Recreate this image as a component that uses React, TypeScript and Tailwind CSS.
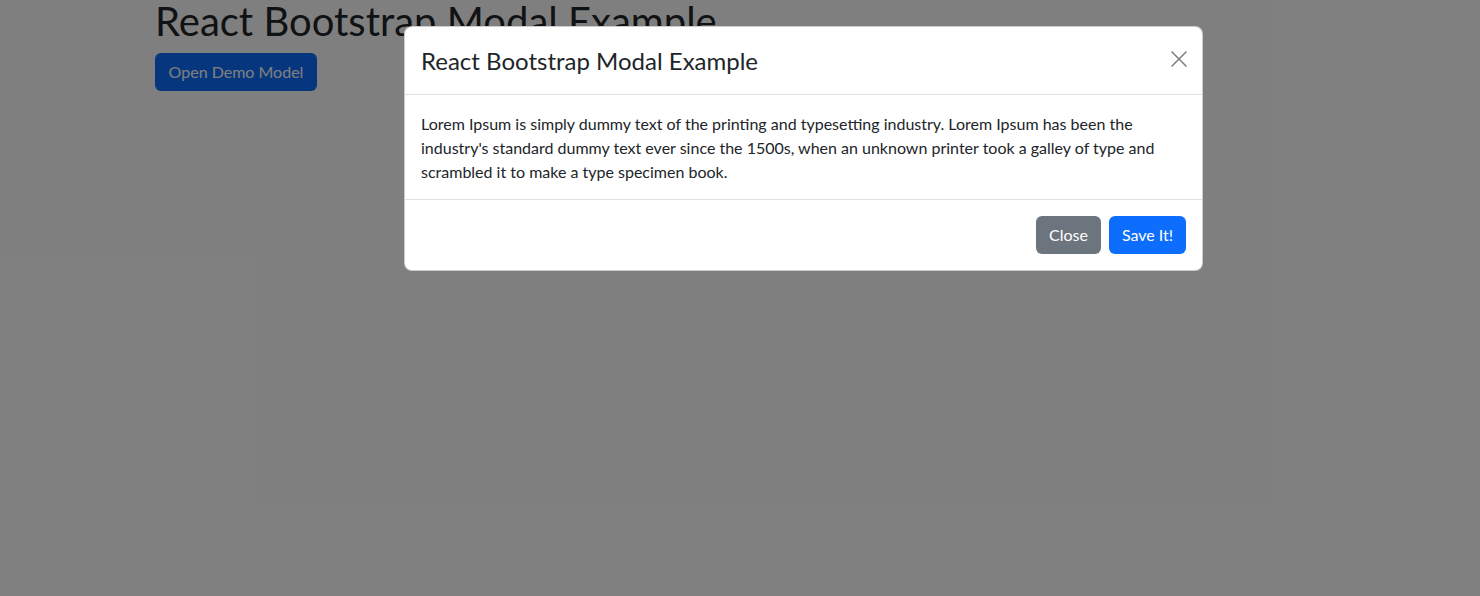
import { useState } from 'react';

const font = { fontFamily: '"Segoe UI", Lato, "Noto Sans", sans-serif' };

export default function App() {
  const [open, setOpen] = useState(true);

  return (
    <div className="relative h-[596px] w-full overflow-hidden bg-white text-[#212529]" style={font}>
      <div className="pl-[155px]">
        <h1 className="-mt-[3px] mb-2 text-[40px] leading-[48px] font-normal">
          React Bootstrap Modal Example
        </h1>
        <button
          type="button"
          onClick={() => setOpen(true)}
          className="h-[38px] w-[162px] rounded-md bg-[#0d6efd] text-base text-white"
        >
          Open Demo Model
        </button>
      </div>

      {open && (
        <>
          <div className="absolute inset-0 bg-black/50" />
          <div className="absolute top-[26px] left-[404px] w-[799px] rounded-lg border border-black/20 bg-white">
            <div className="flex h-[68px] items-center justify-between border-b border-[#dee2e6] pr-[15px] pl-4">
              <div className="text-2xl leading-9 font-normal">React Bootstrap Modal Example</div>
              <button
                type="button"
                aria-label="Close"
                onClick={() => setOpen(false)}
                className="-mt-1 flex size-4 items-center justify-center opacity-50"
              >
                <svg viewBox="0 0 16 16" className="size-4" fill="none" stroke="#000" strokeWidth="1.5">
                  <path d="M0.5 0.5l15 15M15.5 0.5l-15 15" />
                </svg>
              </button>
            </div>
            <div className="border-b border-[#dee2e6] px-4 pt-[17px] pb-[15px] text-base leading-6">
              Lorem Ipsum is simply dummy text of the printing and typesetting industry. Lorem Ipsum has been the
              <br />
              industry's standard dummy text ever since the 1500s, when an unknown printer took a galley of type and
              <br />
              scrambled it to make a type specimen book.
            </div>
            <div className="flex justify-end gap-2 p-4">
              <button
                type="button"
                onClick={() => setOpen(false)}
                className="h-[38px] w-[65px] rounded-md bg-[#6c757d] text-base text-white"
              >
                Close
              </button>
              <button
                type="button"
                onClick={() => setOpen(false)}
                className="h-[38px] w-[77px] rounded-md bg-[#0d6efd] text-base text-white"
              >
                Save It!
              </button>
            </div>
          </div>
        </>
      )}
    </div>
  );
}
